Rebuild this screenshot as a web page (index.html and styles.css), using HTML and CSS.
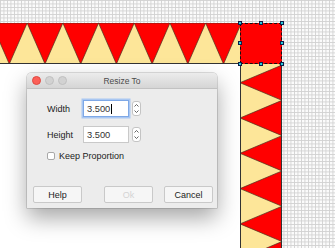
FILE: index.html
```
<!DOCTYPE html>
<html lang="en">
<head>
    <meta charset="UTF-8">
    <title>Resize To</title>
    <link rel="stylesheet" href="styles.css">
</head>
<body>
    <div class="stage">
        <div class="board">
            <div class="left-col">
                <svg class="band-top" width="240" height="41" viewBox="0 0 240 41">
                    <rect width="240" height="41" fill="#fde699"/>
                    <g fill="#ff0000" stroke="#4a3020" stroke-width="0.7">
                        <polygon points="-8.55,0 27.15,0 9.3,41"/>
                        <polygon points="27.15,0 62.85,0 45,41"/>
                        <polygon points="62.85,0 98.55,0 80.7,41"/>
                        <polygon points="98.55,0 134.25,0 116.4,41"/>
                        <polygon points="134.25,0 169.95,0 152.1,41"/>
                        <polygon points="169.95,0 205.65,0 187.8,41"/>
                        <polygon points="205.65,0 241.35,0 223.5,41"/>
                    </g>
                    <line x1="0" y1="40.5" x2="240" y2="40.5" stroke="#333" stroke-width="1"/>
                </svg>
                <div class="sheet"></div>
            </div>
            <div class="right-col">
                <div class="corner">
                    <span class="handle h-tl"></span>
                    <span class="handle h-tc"></span>
                    <span class="handle h-tr"></span>
                    <span class="handle h-ml"></span>
                    <span class="handle h-mr"></span>
                    <span class="handle h-bl"></span>
                    <span class="handle h-bc"></span>
                    <span class="handle h-br"></span>
                </div>
                <svg class="band-right" width="42" height="184" viewBox="0 0 42 184">
                    <rect width="42" height="184" fill="#fde699"/>
                    <g fill="#ff0000" stroke="#4a3020" stroke-width="0.7">
                        <polygon points="42,-34.25 42,1.05 0,-16.6"/>
                        <polygon points="42,1.05 42,36.35 0,18.7"/>
                        <polygon points="42,36.35 42,71.65 0,54"/>
                        <polygon points="42,71.65 42,106.95 0,89.3"/>
                        <polygon points="42,106.95 42,142.25 0,124.6"/>
                        <polygon points="42,142.25 42,177.55 0,159.9"/>
                        <polygon points="42,177.55 42,212.85 0,195.2"/>
                    </g>
                    <line x1="0.5" y1="0" x2="0.5" y2="184" stroke="#333" stroke-width="1"/>
                    <line x1="41.5" y1="0" x2="41.5" y2="184" stroke="#333" stroke-width="1"/>
                </svg>
            </div>
        </div>

        <div class="dialog">
            <div class="titlebar">
                <div class="lights">
                    <span class="light light-close"></span>
                    <span class="light"></span>
                    <span class="light"></span>
                </div>
                <div class="title">Resize To</div>
            </div>
            <div class="dlg-body">
                <div class="field">
                    <span class="field-label">Width</span>
                    <div class="input input-focus">3.500<span class="caret"></span></div>
                    <div class="stepper">
                        <svg width="7" height="13" viewBox="0 0 7 13">
                            <path d="M1.5 4.5 L3.5 2.5 L5.5 4.5 M1.5 8.5 L3.5 10.5 L5.5 8.5" fill="none" stroke="#555" stroke-width="0.9"/>
                        </svg>
                    </div>
                </div>
                <div class="field">
                    <span class="field-label">Height</span>
                    <div class="input">3.500</div>
                    <div class="stepper">
                        <svg width="7" height="13" viewBox="0 0 7 13">
                            <path d="M1.5 4.5 L3.5 2.5 L5.5 4.5 M1.5 8.5 L3.5 10.5 L5.5 8.5" fill="none" stroke="#555" stroke-width="0.9"/>
                        </svg>
                    </div>
                </div>
                <div class="check">
                    <span class="check-box"></span>
                    <span>Keep Proportion</span>
                </div>
            </div>
            <div class="dlg-footer">
                <button class="btn">Help</button>
                <span class="spacer"></span>
                <button class="btn btn-disabled">Ok</button>
                <button class="btn">Cancel</button>
            </div>
        </div>
    </div>
</body>
</html>
```

FILE: styles.css
```
body {
    margin: 0;
    font-family: 'Liberation Sans', Arial, sans-serif;
}

.stage {
    position: relative;
    width: 335px;
    height: 248px;
    overflow: hidden;
    box-sizing: border-box;
    padding-top: 23px;
    background-color: #fbfbfb;
    background-image:
        linear-gradient(90deg, #d2d2d2 1px, transparent 1px),
        linear-gradient(180deg, #d2d2d2 1px, transparent 1px);
    background-size: 3.5px 3.5px;
}

.board {
    display: flex;
    height: 225px;
}

.left-col {
    width: 240px;
    display: flex;
    flex-direction: column;
}

.band-top {
    display: block;
}

.sheet {
    flex: 1;
    background: #fff;
}

.right-col {
    width: 42px;
    display: flex;
    flex-direction: column;
}

.corner {
    position: relative;
    height: 41px;
    box-sizing: border-box;
    background: #ff0000;
    border: 1px dashed #111;
}

.band-right {
    display: block;
}

/* selection handles */
.handle {
    position: absolute;
    width: 2px;
    height: 2px;
    background: #27cddb;
    border: 1px solid #0e1c48;
}

.h-tl { left: -3px; top: -3px; }
.h-tc { left: 18px; top: -3px; }
.h-tr { right: -3px; top: -3px; }
.h-ml { left: -3px; top: 17px; }
.h-mr { right: -3px; top: 17px; }
.h-bl { left: -3px; bottom: -3px; }
.h-bc { left: 18px; bottom: -3px; }
.h-br { right: -3px; bottom: -3px; }

/* dialog */
.dialog {
    position: absolute;
    left: 27px;
    top: 73px;
    width: 190px;
    height: 135px;
    display: flex;
    flex-direction: column;
    background: #ececec;
    border-radius: 4px 4px 0 0;
    box-shadow: 0 10px 22px rgba(0, 0, 0, 0.35), 0 0 0 0.5px rgba(0, 0, 0, 0.25);
    color: #222;
    font-size: 9px;
}

.titlebar {
    display: grid;
    grid-template-columns: 1fr auto 1fr;
    align-items: center;
    height: 16px;
    box-sizing: border-box;
    background: linear-gradient(#ececec, #d5d5d5);
    border-bottom: 1px solid #c2c2c2;
    border-radius: 4px 4px 0 0;
}

.lights {
    display: flex;
    gap: 4px;
    padding-left: 5px;
}

.light {
    width: 7px;
    height: 7px;
    border-radius: 50%;
    background: #d2d2d2;
    border: 0.5px solid #c0c0c0;
}

.light-close {
    background: #fc5f57;
    border-color: #df4941;
}

.title {
    font-size: 8.5px;
    color: #4b4b4b;
}

.dlg-body {
    padding: 11px 0 0 20px;
}

.field {
    display: flex;
    align-items: center;
    height: 17px;
    margin-bottom: 9px;
}

.field-label {
    width: 36px;
}

.input {
    display: flex;
    align-items: center;
    width: 46px;
    height: 17px;
    box-sizing: border-box;
    padding-left: 3px;
    background: #fff;
    border: 1px solid #c9c9c9;
    font-size: 9.3px;
    color: #333;
}

.input-focus {
    border-color: #7ea8e6;
    box-shadow: 0 0 0 1.5px #a9c7f2;
}

.caret {
    display: inline-block;
    width: 1px;
    height: 10px;
    margin-left: 0.5px;
    background: #000;
}

.stepper {
    display: flex;
    align-items: center;
    justify-content: center;
    width: 9px;
    height: 15px;
    box-sizing: border-box;
    margin-left: 3px;
    background: #fff;
    border: 1px solid #c4c4c4;
    border-radius: 3px;
}

.check {
    display: flex;
    align-items: center;
    gap: 4px;
    height: 9px;
    margin-top: -1px;
}

.check-box {
    width: 8px;
    height: 8px;
    box-sizing: border-box;
    background: #fff;
    border: 1px solid #a8a8a8;
    border-radius: 2px;
}

.dlg-footer {
    display: flex;
    gap: 11px;
    margin-top: auto;
    padding: 0 4px 5px 6px;
}

.spacer {
    flex: 1;
}

.btn {
    width: 49px;
    height: 17px;
    padding: 0;
    background: #f6f6f6;
    border: 1px solid #c9c9c9;
    border-radius: 2px;
    font-family: 'Liberation Sans', Arial, sans-serif;
    font-size: 9px;
    color: #222;
}

.btn-disabled {
    color: #d4d4d4;
}
```
